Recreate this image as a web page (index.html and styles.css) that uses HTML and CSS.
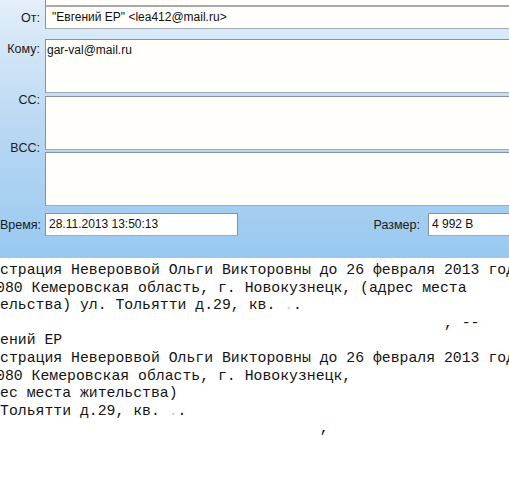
FILE: index.html
```html
<!doctype html>
<html>
    <head>
        <meta name="viewport" content="width=device-width, initial-scale=1.0">
        <title>Сообщение</title>
        <link rel="stylesheet" href="styles.css">
    </head>
    <body>
        <div class="headers">
            <div class="row row-stub">
                <div class="field stub"></div>
            </div>
            <div class="row row-from">
                <div class="label">От:</div>
                <div class="field line from">"Евгений ЕР" &lt;lea412@mail.ru&gt;</div>
            </div>
            <div class="row row-to">
                <div class="label label-to">Кому:</div>
                <div class="field box to">gar-val@mail.ru</div>
            </div>
            <div class="row row-cc">
                <div class="label label-cc">CC:</div>
                <div class="field box"></div>
            </div>
            <div class="row row-bcc">
                <div class="label label-bcc">BCC:</div>
                <div class="field box"></div>
            </div>
            <div class="row row-time">
                <div class="label">Время:</div>
                <div class="field line time">28.11.2013 13:50:13</div>
                <div class="size-label">Размер:</div>
                <div class="field line size">4 992 B</div>
            </div>
        </div>

        <pre class="body-text">страция Невероввой Ольги Викторовны до 26 февраля 2013 года
<span class="cut">080 Кемеровская область, г. Новокузнецк, (адрес места</span>
ельства) ул. Тольятти д.29, кв. <span class="faint">.</span>.
                                                  , --
ений ЕР
страция Невероввой Ольги Викторовны до 26 февраля 2013 года
<span class="cut">080 Кемеровская область, г. Новокузнецк,</span>
ес места жительства)
Тольятти д.29, кв. <span class="faint">.</span>.
                                    ,</pre>
    </body>
</html>
```

FILE: styles.css
```css
body {
    margin: 0;
    padding: 0;
    background-color: #fff;
    overflow: hidden;
    font-family: "Liberation Sans", Arial, sans-serif;
}

.headers {
    width: calc(100% + 20px);
    background: linear-gradient(#e3eef9, #b9d8f3 50%, #98c8f0);
    padding-bottom: 22px;
}

.row {
    display: flex;
    align-items: center;
}

.row-to {
    margin-top: 10px;
    align-items: flex-start;
}

.row-cc {
    margin-top: 3px;
    align-items: flex-start;
}

.row-bcc {
    margin-top: 2px;
    align-items: flex-start;
}

.row-time {
    margin-top: 7px;
}

.label {
    width: 40px;
    padding-right: 5px;
    text-align: right;
    font-size: 12.5px;
    line-height: 14px;
    color: #1a1a1a;
    white-space: nowrap;
    flex: none;
}

.label-to {
    margin-top: 3px;
}

.label-cc {
    margin-top: -3px;
}

.label-bcc {
    margin-top: -11px;
}

.field {
    background-color: #fffefb;
    border: 1px solid #8592a0;
    border-bottom-color: #a3acb6;
    font-size: 12px;
    color: #111;
    box-sizing: border-box;
}

.stub {
    margin-left: 45px;
    flex: 1;
    height: 6px;
    border-top: none;
    border-bottom-color: #a9a9a9;
}

.line {
    height: 23px;
    line-height: 21px;
}

.from {
    flex: 1;
    padding-left: 6px;
    border-top-color: #a9a9a9;
}

.box {
    flex: 1;
    height: 54px;
    line-height: 14px;
    padding: 3px 1px;
}

.time {
    width: 193px;
    flex: none;
    padding-left: 3px;
    background-color: #fff;
}

.size-label {
    margin-left: auto;
    padding-right: 8px;
    font-size: 12.5px;
    color: #1a1a1a;
}

.size {
    width: 101px;
    flex: none;
    padding-left: 3px;
    background-color: #fff;
}

.body-text {
    margin: 0;
    padding: 4px 0 0 0;
    font-family: "Liberation Mono", "Courier New", monospace;
    font-size: 14.8px;
    line-height: 17.6px;
    color: #141414;
    white-space: pre;
}

.cut {
    margin-left: -4px;
}

.faint {
    color: #c8ccd4;
}
```
